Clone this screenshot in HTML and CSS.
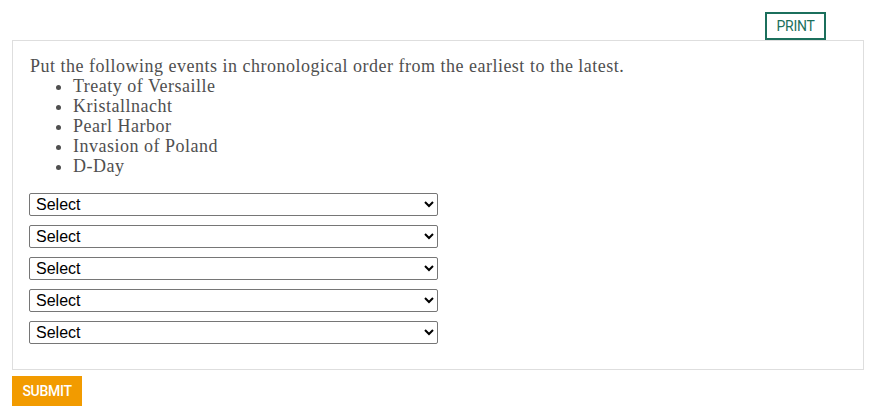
FILE: index.html
```html
<!DOCTYPE html>
<html>
<head>
<meta charset="utf-8">
<link rel="stylesheet" href="styles.css">
</head>
<body>
<div class="page">
  <div class="toolbar">
    <button class="print">PRINT</button>
  </div>
  <div class="question">
    <div class="prompt">Put the following events in chronological order from the earliest to the latest.
      <ul class="events">
        <li>Treaty of Versaille</li>
        <li>Kristallnacht</li>
        <li>Pearl Harbor</li>
        <li>Invasion of Poland</li>
        <li>D-Day</li>
      </ul>
    </div>
    <div class="answers">
      <select class="answer"><option>Select</option></select>
      <select class="answer"><option>Select</option></select>
      <select class="answer"><option>Select</option></select>
      <select class="answer"><option>Select</option></select>
      <select class="answer"><option>Select</option></select>
    </div>
  </div>
  <button class="submit">SUBMIT</button>
</div>
</body>
</html>
```
FILE: styles.css
```css
html, body {
  margin: 0;
  padding: 0;
  background: #fff;
}
.page {
  padding: 12px 12px 0 12px;
  display: flex;
  flex-direction: column;
  align-items: flex-start;
}
.toolbar {
  align-self: stretch;
  display: flex;
  justify-content: flex-end;
  padding-right: 38px;
}
.print {
  box-sizing: border-box;
  height: 28px;
  width: 61px;
  border: 2px solid #1b6f5c;
  background: #fff;
  color: #1b6f5c;
  font-family: "Roboto", sans-serif;
  font-size: 14px;
  letter-spacing: -0.3px;
  padding: 0;
  cursor: pointer;
}
.question {
  align-self: stretch;
  box-sizing: border-box;
  border: 1px solid #dedede;
  padding: 15px 17px 25px 16px;
}
.prompt {
  font-family: "Liberation Serif", serif;
  font-size: 18px;
  letter-spacing: 0.5px;
  line-height: 20px;
  color: #4f4f4f;
  padding-left: 1px;
}
.events {
  margin: 0;
  padding-left: 43px;
}
.answers {
  margin-top: 17px;
  display: flex;
  flex-direction: column;
  gap: 9px;
}
.answer {
  box-sizing: border-box;
  width: 409px;
  height: 23px;
  font-family: "Liberation Sans", Arial, sans-serif;
  font-size: 16px;
  color: #000;
  background: #fff;
  border: 1px solid #767676;
  border-radius: 2px;
  margin: 0;
  padding-left: 2px;
}
.submit {
  margin-top: 6px;
  box-sizing: border-box;
  width: 70px;
  height: 30px;
  border: none;
  background: #f29b00;
  color: #fff;
  font-family: "Roboto", sans-serif;
  font-weight: 500;
  font-size: 14px;
  letter-spacing: -0.3px;
  padding: 0;
}
```
